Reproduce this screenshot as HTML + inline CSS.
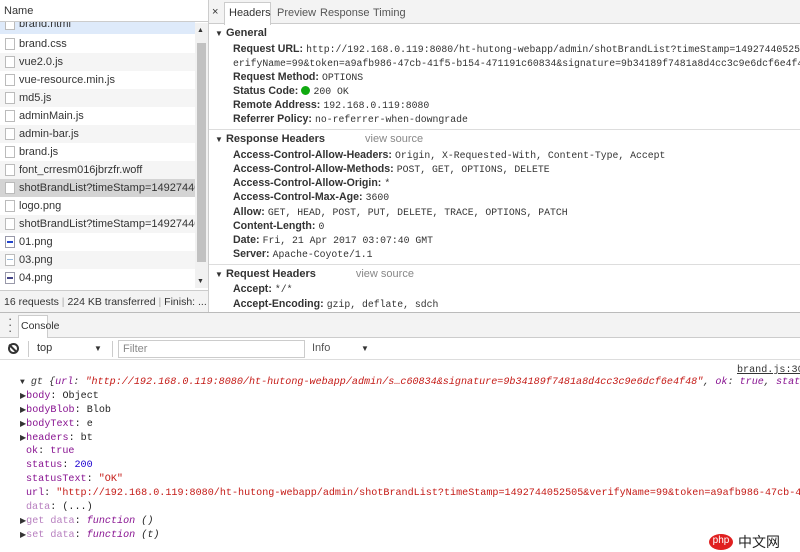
<!DOCTYPE html>
<html><head><style>
*{margin:0;padding:0;box-sizing:border-box}
body{width:800px;height:545px;overflow:hidden;background:#fff;font-family:"Liberation Sans",sans-serif;font-size:11px;color:#222;position:relative}
.a{position:absolute;white-space:nowrap}
.row{position:absolute;left:0;width:195px;height:18px;line-height:18px;padding-left:19px;font-size:11px;color:#333;white-space:nowrap;overflow:hidden}
.ic{position:absolute;left:5px;top:3px;width:10px;height:12px;border:1px solid #bbb;background:#fff}
.m{font-family:"Liberation Mono",monospace;font-size:9.8px;color:#333;font-weight:normal}
.k{font-weight:bold;color:#333;font-size:10.6px}
.sec{font-weight:bold;color:#333}
.vs{color:#888;font-weight:normal;margin-left:40px}
.c{font-family:"Liberation Mono",monospace;font-size:10.1px}
.pk{color:#881391}.rd{color:#c41a16}.bl{color:#1c00cf}
.tri{font-size:8px;color:#333}
</style></head><body>
<!-- left panel -->
<div class="row" style="top:17px;background:#deeafa;height:17px;line-height:14px"><span class="ic" style="top:1px"></span>brand.html</div>
<div class="a" style="left:0;top:0;width:208px;height:22px;border-bottom:1px solid #ccc;background:#fff"></div>
<div class="a" style="left:4px;top:5px;color:#333">Name</div>
<div class="a" style="left:208px;top:0;width:1px;height:312px;background:#ccc"></div>
<div class="row" style="top:35px"><span class="ic"></span>brand.css</div>
<div class="row" style="top:53px;background:#f5f5f5"><span class="ic"></span>vue2.0.js</div>
<div class="row" style="top:71px"><span class="ic"></span>vue-resource.min.js</div>
<div class="row" style="top:89px;background:#f5f5f5"><span class="ic"></span>md5.js</div>
<div class="row" style="top:107px"><span class="ic"></span>adminMain.js</div>
<div class="row" style="top:125px;background:#f5f5f5"><span class="ic"></span>admin-bar.js</div>
<div class="row" style="top:143px"><span class="ic"></span>brand.js</div>
<div class="row" style="top:161px;background:#f5f5f5"><span class="ic"></span>font_crresm016jbrzfr.woff</div>
<div class="row" style="top:179px;background:#d4d4d4"><span class="ic"></span>shotBrandList?timeStamp=149274405.</div>
<div class="row" style="top:197px"><span class="ic"></span>logo.png</div>
<div class="row" style="top:215px;background:#f5f5f5"><span class="ic"></span>shotBrandList?timeStamp=149274405.</div>
<div class="row" style="top:233px"><span class="ic" style="border-color:#99a"><span style="position:absolute;left:1px;top:4px;width:6px;height:2px;background:#24c"></span></span>01.png</div>
<div class="row" style="top:251px;background:#f5f5f5"><span class="ic"><span style="position:absolute;left:1px;top:4px;width:6px;height:1px;background:#9bd"></span></span>03.png</div>
<div class="row" style="top:269px"><span class="ic" style="border-color:#99a"><span style="position:absolute;left:1px;top:4px;width:6px;height:2px;background:#448"></span></span>04.png</div>
<div class="a" style="left:195px;top:23px;width:13px;height:265px;background:#f1f1f1"></div>
<div class="a" style="left:197px;top:43px;width:9px;height:219px;background:#c1c1c1"></div>
<div class="a tri" style="left:197px;top:27px;font-size:7px">▲</div>
<div class="a tri" style="left:197px;top:278px;font-size:7px">▼</div>
<div class="a" style="left:0;top:290px;width:208px;height:22px;border-top:1px solid #ccc;background:#f3f3f3"></div>
<div class="a" style="left:4px;top:296px;color:#333;font-size:10.5px">16 requests <span style="color:#aaa">|</span> 224 KB transferred <span style="color:#aaa">|</span> Finish: ...</div>
<!-- right panel -->
<div class="a" style="left:209px;top:0;width:591px;height:24px;background:#f3f3f3;border-bottom:1px solid #ccc"></div>
<div class="a" style="left:212px;top:6px;color:#333">×</div>
<div class="a" style="left:224px;top:2px;width:47px;height:23px;background:#fff;border:1px solid #ccc;border-bottom:none"></div>
<div class="a" style="left:229px;top:7px;color:#333">Headers</div>
<div class="a" style="left:277px;top:7px;color:#555">Preview</div>
<div class="a" style="left:320px;top:7px;color:#555">Response</div>
<div class="a" style="left:373px;top:7px;color:#555">Timing</div>
<div class="a sec" style="left:215px;top:27px"><span class="tri">▼</span> General</div>
<div class="a" style="left:233px;top:43px"><span class="k">Request URL:</span> <span class="m">http://192.168.0.119:8080/ht-hutong-webapp/admin/shotBrandList?timeStamp=1492744052505&amp;v</span></div>
<div class="a m" style="left:233px;top:58px">erifyName=99&amp;token=a9afb986-47cb-41f5-b154-471191c60834&amp;signature=9b34189f7481a8d4cc3c9e6dcf6e4f48</div>
<div class="a" style="left:233px;top:71px"><span class="k">Request Method:</span> <span class="m">OPTIONS</span></div>
<div class="a" style="left:233px;top:85px"><span class="k">Status Code:</span> <span style="display:inline-block;width:9px;height:9px;border-radius:50%;background:#1a1;vertical-align:-1px"></span> <span class="m">200 OK</span></div>
<div class="a" style="left:233px;top:99px"><span class="k">Remote Address:</span> <span class="m">192.168.0.119:8080</span></div>
<div class="a" style="left:233px;top:113px"><span class="k">Referrer Policy:</span> <span class="m">no-referrer-when-downgrade</span></div>
<div class="a" style="left:209px;top:129px;width:591px;height:1px;background:#ddd"></div>
<div class="a sec" style="left:215px;top:133px"><span class="tri">▼</span> Response Headers<span class="vs">view source</span></div>
<div class="a" style="left:233px;top:149px"><span class="k">Access-Control-Allow-Headers:</span> <span class="m">Origin, X-Requested-With, Content-Type, Accept</span></div>
<div class="a" style="left:233px;top:163px"><span class="k">Access-Control-Allow-Methods:</span> <span class="m">POST, GET, OPTIONS, DELETE</span></div>
<div class="a" style="left:233px;top:177px"><span class="k">Access-Control-Allow-Origin:</span> <span class="m">*</span></div>
<div class="a" style="left:233px;top:191px"><span class="k">Access-Control-Max-Age:</span> <span class="m">3600</span></div>
<div class="a" style="left:233px;top:206px"><span class="k">Allow:</span> <span class="m">GET, HEAD, POST, PUT, DELETE, TRACE, OPTIONS, PATCH</span></div>
<div class="a" style="left:233px;top:220px"><span class="k">Content-Length:</span> <span class="m">0</span></div>
<div class="a" style="left:233px;top:234px"><span class="k">Date:</span> <span class="m">Fri, 21 Apr 2017 03:07:40 GMT</span></div>
<div class="a" style="left:233px;top:248px"><span class="k">Server:</span> <span class="m">Apache-Coyote/1.1</span></div>
<div class="a" style="left:209px;top:264px;width:591px;height:1px;background:#ddd"></div>
<div class="a sec" style="left:215px;top:268px"><span class="tri">▼</span> Request Headers<span class="vs">view source</span></div>
<div class="a" style="left:233px;top:283px"><span class="k">Accept:</span> <span class="m">*/*</span></div>
<div class="a" style="left:233px;top:298px"><span class="k">Accept-Encoding:</span> <span class="m">gzip, deflate, sdch</span></div>
<!-- console drawer -->
<div class="a" style="left:0;top:312px;width:800px;height:26px;background:#f3f3f3;border-top:1px solid #bbb;border-bottom:1px solid #ccc"></div>
<div class="a" style="left:8px;top:316px;color:#555;font-size:13px;line-height:6px">·<br>·<br>·</div>
<div class="a" style="left:18px;top:315px;width:30px;height:23px;background:#fff;border:1px solid #ccc;border-bottom:none"></div>
<div class="a" style="left:21px;top:320px;color:#333;font-size:10.5px">Console</div>
<div class="a" style="left:0;top:338px;width:800px;height:22px;border-bottom:1px solid #ddd;background:#fff"></div>
<div class="a" style="left:8px;top:343px;width:11px;height:11px;border:2px solid #333;border-radius:50%"></div>
<div class="a" style="left:12px;top:343px;width:2px;height:11px;background:#333;transform:rotate(-45deg)"></div>
<div class="a" style="left:28px;top:341px;width:1px;height:16px;background:#ccc"></div>
<div class="a" style="left:37px;top:342px;color:#333">top</div>
<div class="a tri" style="left:94px;top:344px">▼</div>
<div class="a" style="left:112px;top:341px;width:1px;height:16px;background:#ccc"></div>
<div class="a" style="left:118px;top:340px;width:187px;height:18px;border:1px solid #ccc"></div>
<div class="a" style="left:123px;top:343px;color:#888">Filter</div>
<div class="a" style="left:312px;top:342px;color:#555">Info</div>
<div class="a tri" style="left:361px;top:344px">▼</div>
<div class="a c" style="left:737px;top:365px;color:#333;text-decoration:underline">brand.js:30</div>
<div class="a c" style="left:20px;top:377px;color:#333"><span class="tri">▼</span> <i>gt {<span class="pk">url</span>: <span class="rd">"http://192.168.0.119:8080/ht-hutong-webapp/admin/s…c60834&amp;signature=9b34189f7481a8d4cc3c9e6dcf6e4f48"</span>, <span class="pk">ok</span>: <span class="pk">true</span>, <span class="pk">status</span>: <span class="bl">200</span>,</i></div>
<div class="a c" style="left:20px;top:391px"><span class="tri">▶</span><span class="pk">body</span>: Object</div>
<div class="a c" style="left:20px;top:405px"><span class="tri">▶</span><span class="pk">bodyBlob</span>: Blob</div>
<div class="a c" style="left:20px;top:419px"><span class="tri">▶</span><span class="pk">bodyText</span>: e</div>
<div class="a c" style="left:20px;top:433px"><span class="tri">▶</span><span class="pk">headers</span>: bt</div>
<div class="a c" style="left:26px;top:446px"><span class="pk">ok</span>: <span class="pk">true</span></div>
<div class="a c" style="left:26px;top:460px"><span class="pk">status</span>: <span class="bl">200</span></div>
<div class="a c" style="left:26px;top:474px"><span class="pk">statusText</span>: <span class="rd">"OK"</span></div>
<div class="a c" style="left:26px;top:488px"><span class="pk">url</span>: <span class="rd">"http://192.168.0.119:8080/ht-hutong-webapp/admin/shotBrandList?timeStamp=1492744052505&amp;verifyName=99&amp;token=a9afb986-47cb-41f5-b1</span></div>
<div class="a c" style="left:26px;top:502px"><span style="color:#b77fbf">data</span>: (...)</div>
<div class="a c" style="left:20px;top:516px"><span class="tri">▶</span><span style="color:#b77fbf">get data</span>: <i class="pk">function</i> <i>()</i></div>
<div class="a c" style="left:20px;top:530px"><span class="tri">▶</span><span style="color:#b77fbf">set data</span>: <i class="pk">function</i> <i>(t)</i></div>
<div class="a" style="left:709px;top:534px;width:24px;height:16px;border-radius:50%;background:#e02020;color:#fff;font-size:10px;text-align:center;line-height:14px">php</div>
<div class="a" style="left:738px;top:532px;color:#222;font-size:14px;font-family:'Noto Sans CJK SC',sans-serif">中文网</div>
</body></html>
